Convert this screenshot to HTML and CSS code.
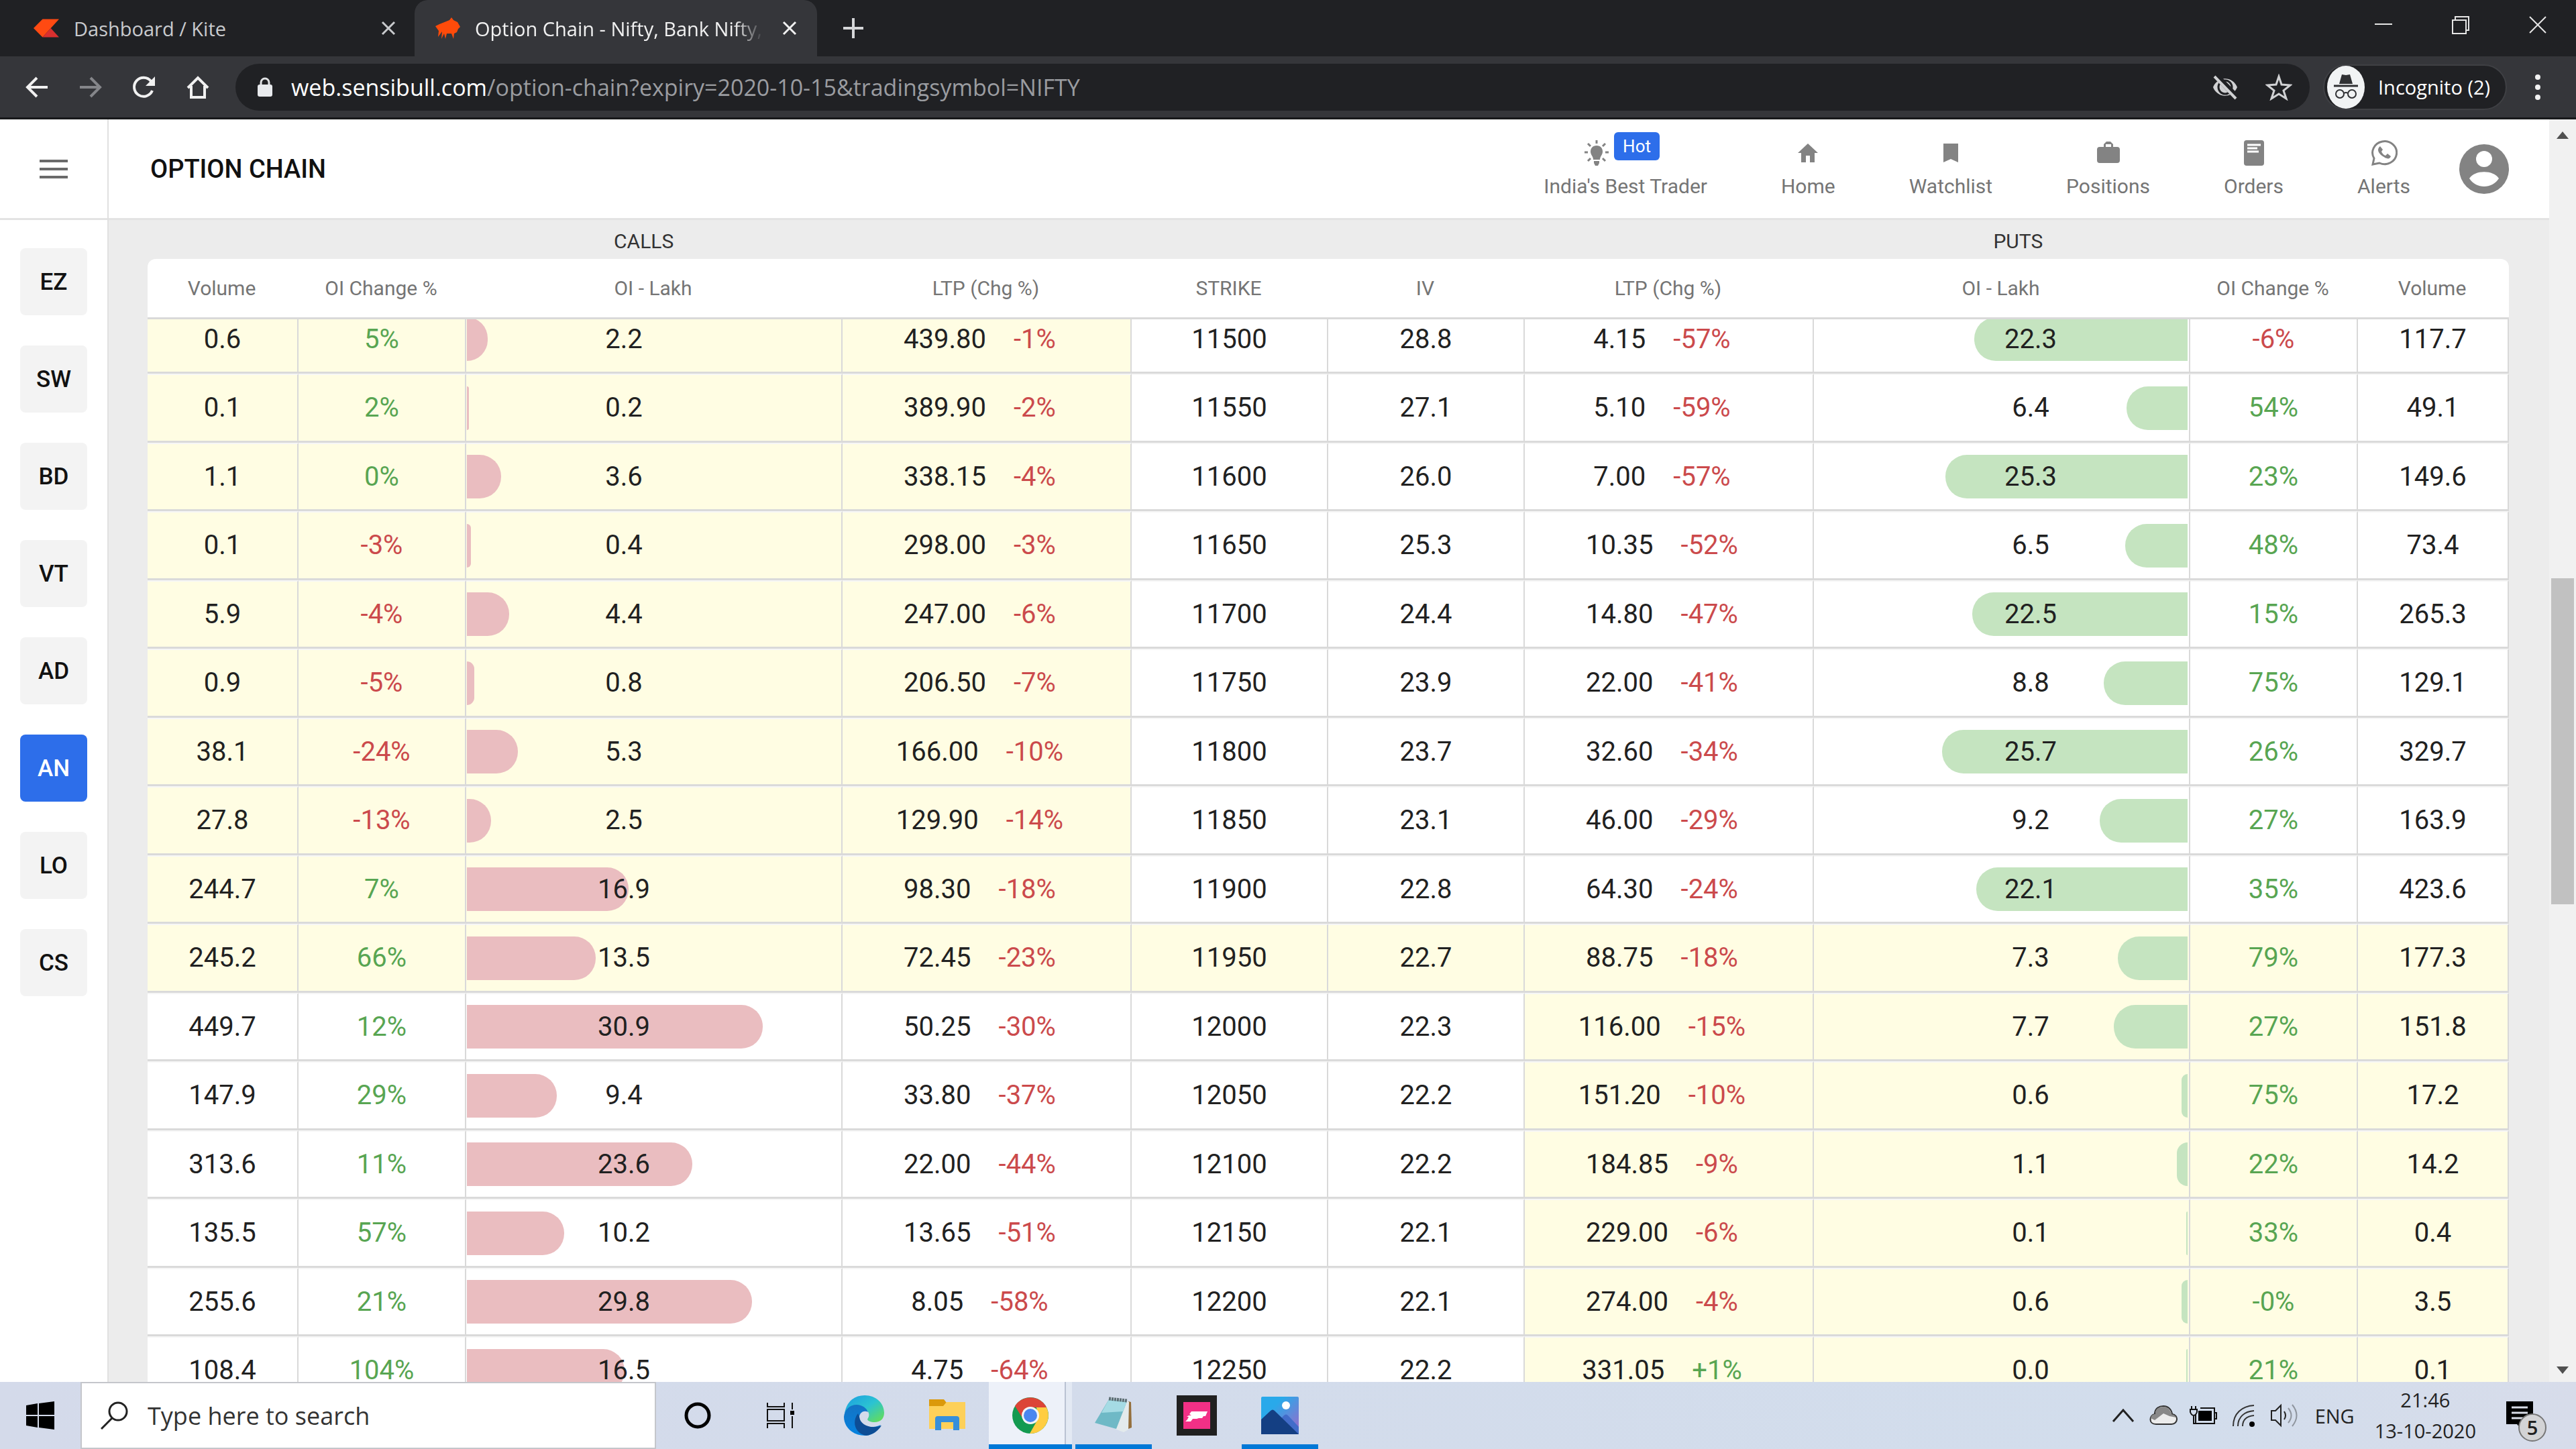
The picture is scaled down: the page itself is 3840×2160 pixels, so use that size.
FILE: index.html
```html
<!DOCTYPE html>
<html lang="en">
<head>
    <meta charset="UTF-8">
    <meta name="viewport" content="width=device-width, initial-scale=1.0">
    <title>Option Chain - Nifty, Bank Nifty</title>
    <link rel="stylesheet" href="styles.css">
</head>
<body>
    <!-- Tabs -->
    <div class="tabs">
        <div class="tab tab-first">
            <svg class="favicon" viewBox="0 0 34 24"><path d="M12 0h22L23 12 12 24 0 12z" fill="#ff4a12"/><path d="M23 12l11 12H12z" fill="#d9302f"/></svg>
            <span class="tab-title">Dashboard / Kite</span>
            <button class="tab-close" aria-label="Close tab"><svg viewBox="0 0 22 22"><path d="M2 2l18 18M20 2L2 20"/></svg></button>
        </div>
        <div class="tab active">
            <svg class="favicon" viewBox="0 0 38 32"><path d="M1 13l6-3 15-6 3-4 3 4 6 3 4 7-3 3-2 5-4 2-1 8-3-8h-7l-2 8-2-8-4 8 1-11-6 8 1-9z" fill="#ff4b0a"/></svg>
            <span class="tab-title">Option Chain - Nifty, Bank Nifty, F</span>
            <button class="tab-close" aria-label="Close tab"><svg viewBox="0 0 22 22"><path d="M2 2l18 18M20 2L2 20"/></svg></button>
        </div>
        <button class="new-tab" aria-label="New tab"><svg viewBox="0 0 30 30"><path d="M15 0v30M0 15h30"/></svg></button>
        <div class="window-controls">
            <button aria-label="Minimize"><svg viewBox="0 0 30 30"><path d="M2 14h26"/></svg></button>
            <button aria-label="Restore"><svg viewBox="0 0 30 30"><path d="M3 8h20v20H3zM7 8V3h20v20h-4"/></svg></button>
            <button aria-label="Close"><svg viewBox="0 0 30 30"><path d="M3 3l24 24M27 3L3 27"/></svg></button>
        </div>
    </div>

    <!-- Toolbar -->
    <div class="toolbar">
        <button class="tool" aria-label="Back"><svg viewBox="0 0 36 36"><path d="M34 18H4M18 4L4 18l14 14"/></svg></button>
        <button class="tool disabled" aria-label="Forward"><svg viewBox="0 0 36 36"><path d="M2 18h30M18 4l14 14-14 14"/></svg></button>
        <button class="tool" aria-label="Reload"><svg viewBox="0 0 36 36"><path d="M30 23a14 14 0 1 1-2-14"/><path d="M34 2v14H20z" class="solid"/></svg></button>
        <button class="tool" aria-label="Home"><svg viewBox="0 0 36 36"><path d="M3 19L18 4l15 15M8 16v17h20V16"/></svg></button>
        <div class="url-bar">
            <svg class="lock" viewBox="0 0 22 30"><path d="M5 12V8a6 6 0 0 1 12 0v4" fill="none" stroke="#e0e2e4" stroke-width="3"/><rect y="11" width="22" height="18" rx="3" fill="#e8eaed"/></svg>
            <span class="url"><b>web.sensibull.com</b>/option-chain?expiry=2020-10-15&amp;tradingsymbol=NIFTY</span>
            <svg class="url-icon" viewBox="0 0 40 40"><path d="M2 20C9 3 31 3 38 20 31 37 9 37 2 20z" fill="#d0d1d3"/><circle cx="20" cy="20" r="10" fill="none" stroke="#202124" stroke-width="3"/><path d="M7 3l30 32" stroke="#202124" stroke-width="9"/><path d="M4 4l32 33" stroke="#d0d1d3" stroke-width="4"/></svg>
            <svg class="url-icon" viewBox="0 0 40 40"><path d="M20 4l4 12 13 1-10 8 4 12-11-7-11 7 4-12-10-8 13-1z" fill="none" stroke="#d0d1d3" stroke-width="3"/></svg>
        </div>
        <button class="incognito">
            <svg viewBox="0 0 56 64"><ellipse cx="28" cy="32" rx="28" ry="32" fill="#f1f3f4"/><path d="M22 13l6 1 6-1 4 14H18z" fill="#303134"/><path d="M10 30h36" stroke="#303134" stroke-width="3"/><g fill="none" stroke="#303134" stroke-width="2"><circle cx="19" cy="42" r="6"/><circle cx="37" cy="42" r="6"/><path d="M25 41q3-2 6 0"/></g></svg>
            Incognito (2)
        </button>
        <button class="kebab" aria-label="Menu"><svg viewBox="0 0 10 40"><circle cx="5" cy="5" r="4"/><circle cx="5" cy="20" r="4"/><circle cx="5" cy="35" r="4"/></svg></button>
    </div>

    <!-- Page -->
    <div class="page">
        <aside class="sidebar">
            <button class="menu" aria-label="Open menu"><svg viewBox="0 0 42 30"><path d="M0 3h42M0 15h42M0 27h42"/></svg></button>
            <nav class="shortcuts">
                <a href="#">EZ</a>
                <a href="#">SW</a>
                <a href="#">BD</a>
                <a href="#">VT</a>
                <a href="#">AD</a>
                <a href="#" class="active">AN</a>
                <a href="#">LO</a>
                <a href="#">CS</a>
            </nav>
        </aside>

        <main>
            <header class="header">
                <h1>OPTION CHAIN</h1>
                <nav class="nav">
                    <a href="#" class="trader">
                        <span class="icon-row">
                            <svg viewBox="0 0 36 40"><path d="M18 9c6 0 9 4 9 9 0 5-4 7-4 12H13c0-5-4-7-4-12 0-5 3-9 9-9zM14 32h8v3l-2 4h-4l-2-4z"/><path d="M18 1v5M5 6l4 4M31 6l-4 4M0 19h5M31 19h5M5 32l4-4M31 32l-4-4" stroke="#838383" stroke-width="3"/></svg>
                            <span class="hot">Hot</span>
                        </span>
                        India's Best Trader
                    </a>
                    <a href="#"><svg viewBox="0 0 40 40"><path d="M20 6l15 14h-5v14h-7V24h-6v10h-7V20H5z"/></svg>Home</a>
                    <a href="#"><svg viewBox="0 0 40 40"><path d="M9 6h22v28l-11-5-11 5z"/></svg>Watchlist</a>
                    <a href="#"><svg viewBox="0 0 40 40"><path d="M13 11V7l4-4h6l4 4v4h6q4 0 4 4v16q0 4-4 4H7q-4 0-4-4V15q0-4 4-4zm3 0h8V7h-8z" fill-rule="evenodd"/></svg>Positions</a>
                    <a href="#"><svg viewBox="0 0 40 40"><rect x="5" y="1" width="30" height="38" rx="4"/><path d="M10 8h20M10 13h15M10 18h17" stroke="#fff" stroke-width="3"/></svg>Orders</a>
                    <a href="#"><svg viewBox="0 0 40 40"><path d="M3 37l2-9a18 17 0 1 1 8 7z" fill="none" stroke="#838383" stroke-width="3"/><path d="M14 10c-6 5-2 11 4 15 6 4 10 5 12 0l-5-4-3 3c-3-1-5-4-6-6l2-3z"/></svg>Alerts</a>
                </nav>
                <button class="avatar" aria-label="Account"><svg viewBox="0 0 74 74"><circle cx="37" cy="37" r="37" fill="#838383"/><circle cx="37" cy="22" r="12" fill="#fff"/><path d="M15 51c8-13 36-13 44 0-10 16-34 16-44 0z" fill="#fff"/></svg></button>
            </header>

            <section class="chain">
                <div class="sides"><span>CALLS</span><span></span><span>PUTS</span></div>
                <div class="table-wrap" id="tableWrap">
                    <table>
                        <colgroup>
                            <col class="c-volume"><col class="c-change"><col class="c-oi"><col class="c-ltp">
                            <col class="c-mid"><col class="c-mid">
                            <col class="c-ltp"><col class="c-oi"><col class="c-change"><col class="c-volume">
                        </colgroup>
                        <thead>
                            <tr>
                                <th>Volume</th>
                                <th>OI Change %</th>
                                <th>OI - Lakh</th>
                                <th>LTP (Chg %)</th>
                                <th>STRIKE</th>
                                <th>IV</th>
                                <th>LTP (Chg %)</th>
                                <th>OI - Lakh</th>
                                <th>OI Change %</th>
                                <th>Volume</th>
                            </tr>
                        </thead>
                        <tbody id="rows"></tbody>
                    </table>
                </div>
            </section>
        </main>

        <div class="scrollbar">
            <svg viewBox="0 0 20 12"><path d="M10 0l9 11H1z"/></svg>
            <div class="space-before"></div>
            <div class="thumb"></div>
            <div class="space-after"></div>
            <svg viewBox="0 0 20 12"><path d="M10 12L1 1h18z"/></svg>
        </div>
    </div>

    <!-- Taskbar -->
    <footer class="taskbar">
        <button class="start" aria-label="Start"><svg viewBox="0 0 42 42"><path d="M0 6l17-3v17H0zM19 3l23-3v20H19zM0 22h17v17L0 36zM19 22h23v20l-23-3z"/></svg></button>
        <label class="search">
            <svg viewBox="0 0 42 42"><circle cx="26" cy="15" r="13"/><path d="M17 25L1 41"/></svg>
            <input type="text" placeholder="Type here to search" aria-label="Search">
        </label>
        <button class="app" aria-label="Cortana"><svg viewBox="0 0 42 42"><circle cx="21" cy="21" r="17" fill="none" stroke="#000" stroke-width="5"/></svg></button>
        <button class="app" aria-label="Task view"><svg viewBox="0 0 42 42"><path d="M1 2v6h25V2M1 12h25v17H1zM1 40v-7h25v7M38 2v10M38 22v18" fill="none" stroke="#111" stroke-width="2"/><path d="M35 14h6v6h-6z"/></svg></button>
        <button class="app" aria-label="Edge"><svg class="large" viewBox="0 0 60 60">
            <defs>
                <linearGradient id="edgeTop" x1="0" y1="0" x2="1" y2="1"><stop offset="0" stop-color="#1b9de2"/><stop offset=".5" stop-color="#2bc3d2"/><stop offset="1" stop-color="#6be04a"/></linearGradient>
                <linearGradient id="edgeLow" x1="0" y1="0" x2="0" y2="1"><stop offset="0" stop-color="#1473c4"/><stop offset="1" stop-color="#0583e0"/></linearGradient>
            </defs>
            <path d="M1 27C4 9 16 0 31 0c17 0 29 12 29 26 0 9-6 14-14 14-8 0-13-3-10-6 4-7-1-14-9-15C18 14 6 18 1 27z" fill="url(#edgeTop)"/>
            <path d="M0 32C1 20 10 14 19 14c8 0 15 5 17 11-6-3-12 0-13 7 0 12 14 20 32 12C48 56 40 60 31 60 14 60 0 48 0 32z" fill="url(#edgeLow)"/>
            <path d="M21 27c-10 13-4 30 12 33 10-1 18-7 23-15-16 6-32-1-33-13z" fill="#0d4d95"/>
        </svg></button>
        <button class="app" aria-label="File Explorer"><svg class="large" viewBox="0 0 60 60"><path d="M3 6h22l4 5-4 5H3z" fill="#db990b"/><path d="M3 16h21l5-6h28v40H3z" fill="#fdd059"/><path d="M12 52V35q0-4 4-4h28q4 0 4 4v17h-9V40H21v12z" fill="#368fdb"/></svg></button>
        <button class="app open current" aria-label="Chrome"><svg class="large" viewBox="0 0 60 60"><circle cx="30" cy="30" r="27" fill="#139a50"/><path d="M7 16A27 27 0 0 1 54 18H30L17 32z" fill="#dc4437"/><path d="M54 18a27 27 0 0 1-25 39l13-23-3-16z" fill="#ffcd42"/><circle cx="30" cy="30" r="13" fill="#f4f4f4"/><circle cx="30" cy="30" r="10" fill="#4a86f0"/></svg></button>
        <button class="app open" aria-label="Notepad"><svg class="large" viewBox="0 0 60 60"><path d="M52 9l4 1 1 38-5 2z" fill="#946f3c"/><path d="M49 8l4 2-1 41-7 4-13-5z" fill="#e3eaec"/><path d="M23 6l27 3-16 41-32-9z" fill="#6fb9c6"/><path d="M23 6l27 3-6 15-32 2z" fill="#a5dbe4"/><path d="M23 5l27 3" stroke="#5d6e73" stroke-width="5" stroke-dasharray="3 1"/></svg></button>
        <button class="app" aria-label="Trading app"><svg class="large" viewBox="0 0 60 60"><path d="M0 0h60v60H0z" fill="#202020"/><path d="M10 10h40v40H10z" fill="#f23086"/><path d="M22 24h24l-3 7h-3l-2 3h-5l-3 1h-6l-3 4h-8l3-3 2-4h-3l3-2h4l-3-2z" fill="#fff"/></svg></button>
        <button class="app open" aria-label="Photos"><svg class="large" viewBox="0 0 60 60"><defs><linearGradient id="photo" x1="0" y1="0" x2="1" y2="1"><stop offset=".3" stop-color="#29a9ea"/><stop offset="1" stop-color="#a166c8"/></linearGradient></defs><rect x="2" y="2" width="56" height="56" rx="2" fill="url(#photo)"/><path d="M28 38l8-8q3-3 6 0l16 17v11H40z" fill="#426cc9"/><path d="M2 36l14-13q3-3 6 0l36 35H2z" fill="#143f83"/><circle cx="39" cy="15" r="6" fill="#fff"/></svg></button>

        <div class="tray">
            <svg class="chevron" viewBox="0 0 42 42"><path d="M6 30l15-17 15 17"/></svg>
            <svg viewBox="0 0 42 42"><path d="M10 34C-2 34 0 20 8 19 8 10 15 7 21 7s12 4 13 12c10 1 9 15-1 15z" fill="#ececec" stroke="#333" stroke-width="2"/><path d="M2 25c1-4 3-6 7-6C8 11 15 8 21 8s10 4 12 11c3 1 6 2 7 5l-10-2-9-4-13 10z" fill="#888"/></svg>
            <svg viewBox="0 0 42 42"><path d="M9 20v13h28V10H16M37 17h3v9h-3M3 7v5M9 7v5M1 12h10v4q-2 5-5 5t-5-5zM6 21v12h4" fill="none" stroke="#111" stroke-width="2"/><path d="M13 14h20v15H13z"/></svg>
            <svg viewBox="0 0 42 42"><path d="M5 37C5 18 18 7 36 6M12 37c0-14 10-22 24-23M19 37c0-10 7-15 17-16" fill="none" stroke="#333" stroke-width="2"/><circle cx="33" cy="34" r="4"/></svg>
            <svg viewBox="0 0 42 42"><path d="M2 14h6l8-8v30l-8-8H2z" fill="none" stroke="#222" stroke-width="2"/><path d="M21 15q4 6 0 12" fill="none" stroke="#222" stroke-width="2"/><path d="M27 10q9 11 0 22M33 5q13 16 0 32" fill="none" stroke="#8f959e" stroke-width="2"/></svg>
            <span class="lang">ENG</span>
            <div class="clock"><time>21:46</time><span>13-10-2020</span></div>
            <button class="notifications" aria-label="Notifications">
                <svg viewBox="0 0 42 42"><path d="M0 0h40v34H28l-6 7-6-7H0z"/><path d="M8 9h24M8 17h24M8 25h17" stroke="#d8dce6" stroke-width="3"/></svg>
                <span class="badge">5</span>
            </button>
        </div>
    </footer>

    <script>
        // OI (in lakh) that would fill the whole cell
        var MAX_OI = 39;

        // call volume, OI change, OI, LTP, chg | strike, IV | put LTP, chg, OI, OI change, volume
        var data = [
            ["0.6", "5%", "2.2", "439.80", "-1%", 11500, "28.8", "4.15", "-57%", "22.3", "-6%", "117.7"],
            ["0.1", "2%", "0.2", "389.90", "-2%", 11550, "27.1", "5.10", "-59%", "6.4", "54%", "49.1"],
            ["1.1", "0%", "3.6", "338.15", "-4%", 11600, "26.0", "7.00", "-57%", "25.3", "23%", "149.6"],
            ["0.1", "-3%", "0.4", "298.00", "-3%", 11650, "25.3", "10.35", "-52%", "6.5", "48%", "73.4"],
            ["5.9", "-4%", "4.4", "247.00", "-6%", 11700, "24.4", "14.80", "-47%", "22.5", "15%", "265.3"],
            ["0.9", "-5%", "0.8", "206.50", "-7%", 11750, "23.9", "22.00", "-41%", "8.8", "75%", "129.1"],
            ["38.1", "-24%", "5.3", "166.00", "-10%", 11800, "23.7", "32.60", "-34%", "25.7", "26%", "329.7"],
            ["27.8", "-13%", "2.5", "129.90", "-14%", 11850, "23.1", "46.00", "-29%", "9.2", "27%", "163.9"],
            ["244.7", "7%", "16.9", "98.30", "-18%", 11900, "22.8", "64.30", "-24%", "22.1", "35%", "423.6"],
            ["245.2", "66%", "13.5", "72.45", "-23%", 11950, "22.7", "88.75", "-18%", "7.3", "79%", "177.3"],
            ["449.7", "12%", "30.9", "50.25", "-30%", 12000, "22.3", "116.00", "-15%", "7.7", "27%", "151.8"],
            ["147.9", "29%", "9.4", "33.80", "-37%", 12050, "22.2", "151.20", "-10%", "0.6", "75%", "17.2"],
            ["313.6", "11%", "23.6", "22.00", "-44%", 12100, "22.2", "184.85", "-9%", "1.1", "22%", "14.2"],
            ["135.5", "57%", "10.2", "13.65", "-51%", 12150, "22.1", "229.00", "-6%", "0.1", "33%", "0.4"],
            ["255.6", "21%", "29.8", "8.05", "-58%", 12200, "22.1", "274.00", "-4%", "0.6", "-0%", "3.5"],
            ["108.4", "104%", "16.5", "4.75", "-64%", 12250, "22.2", "331.05", "+1%", "0.0", "21%", "0.1"]
        ];
        var ATM = 11950;

        function color(value) {
            return parseFloat(value) < 0 ? "red" : "green";
        }

        function cell(content, itm) {
            return `<td class="${itm ? "itm" : ""}">${content}</td>`;
        }

        function change(value) {
            return `<span class="${color(value)}">${value}</span>`;
        }

        function oi(value, side) {
            var width = Math.max(value / MAX_OI * 100, 0.4);
            return `<div class="oi ${side}"><div class="bar" style="width: ${width}%"></div><span>${value}</span></div>`;
        }

        function ltp(price, chg) {
            return `<div class="ltp"><span>${price}</span>${change(chg)}</div>`;
        }

        var html = "";
        data.forEach(function (r) {
            var strike = r[5];
            var callItm = strike <= ATM;
            var putItm = strike >= ATM;
            var atm = strike === ATM;
            html += "<tr>" +
                cell(r[0], callItm) +
                cell(change(r[1]), callItm) +
                cell(oi(r[2], "call"), callItm) +
                cell(ltp(r[3], r[4]), callItm) +
                cell(strike, atm) +
                cell(r[6], atm) +
                cell(ltp(r[7], r[8]), putItm) +
                cell(oi(r[9], "put"), putItm) +
                cell(change(r[10]), putItm) +
                cell(r[11], putItm) +
                "</tr>";
        });
        document.getElementById("rows").innerHTML = html;
        document.getElementById("tableWrap").scrollTop = 21;
    </script>
</body>
</html>
```
FILE: styles.css
```css
* {
    box-sizing: border-box;
}
body {
    margin: 0;
    height: 100vh;
    overflow: hidden;
    display: flex;
    flex-direction: column;
    font-family: Roboto, sans-serif;
    color: #212121;
}
button {
    padding: 0;
    border: none;
    background: none;
    font: inherit;
    color: inherit;
    display: flex;
    align-items: center;
    justify-content: center;
}
a {
    color: inherit;
    text-decoration: none;
}
svg {
    flex: none;
}

/* Tabs */
.tabs {
    height: 84px;
    flex: none;
    display: flex;
    background: #202124;
    color: #c8cacd;
    font-family: "Open Sans", sans-serif;
    font-size: 29px;
}
.tab {
    width: 600px;
    display: flex;
    align-items: center;
    padding: 0 30px;
}
.tab-first {
    width: 618px;
    padding: 0 28px 0 50px;
}
.tab.active {
    background: #35363a;
    border-radius: 20px 20px 0 0;
    color: #f1f1f1;
}
.favicon {
    width: 38px;
    height: 28px;
    margin-right: 22px;
}
.active .favicon {
    height: 34px;
}
.tab-title {
    flex: 1;
    overflow: hidden;
    white-space: nowrap;
}
.tab.active .tab-title {
    margin-right: 28px;
    mask-image: linear-gradient(to right, #000 90%, transparent);
}
.tab-close svg {
    width: 22px;
    height: 22px;
    fill: none;
    stroke: currentColor;
    stroke-width: 3;
}
.new-tab {
    width: 108px;
}
.new-tab svg {
    width: 30px;
    height: 30px;
    stroke: #d5d6d8;
    stroke-width: 4;
}
.window-controls {
    margin-left: auto;
    height: 74px;
    display: flex;
}
.window-controls button {
    width: 115px;
}
.window-controls svg {
    width: 30px;
    height: 30px;
    fill: none;
    stroke: #e6e6e6;
    stroke-width: 2;
}

/* Toolbar */
.toolbar {
    height: 94px;
    flex: none;
    display: flex;
    align-items: center;
    padding: 0 11px 0 15px;
    background: #35363a;
    border-bottom: 3px solid #18191b;
    font-family: "Open Sans", sans-serif;
}
.tool {
    width: 80px;
    height: 70px;
}
.tool svg {
    width: 36px;
    height: 36px;
    fill: none;
    stroke: #f1f1f1;
    stroke-width: 4;
}
.tool .solid {
    fill: #f1f1f1;
    stroke: none;
}
.tool.disabled svg {
    stroke: #85868a;
}
.url-bar {
    flex: 1;
    height: 70px;
    margin-left: 16px;
    padding: 0 26px 0 33px;
    display: flex;
    align-items: center;
    border-radius: 35px;
    background: #202124;
}
.lock {
    width: 22px;
    height: 30px;
    margin-right: 28px;
}
.url {
    flex: 1;
    font-size: 34px;
    color: #9a9ca0;
}
.url b {
    font-weight: 400;
    color: #fff;
}
.url-icon {
    width: 40px;
    height: 40px;
    margin-left: 40px;
}
.incognito {
    width: 274px;
    height: 68px;
    margin-left: 20px;
    padding-left: 4px;
    gap: 20px;
    justify-content: flex-start;
    white-space: nowrap;
    border: 2px solid #3f4044;
    border-radius: 34px;
    background: #202124;
    color: #fff;
    font-size: 29px;
}
.incognito svg {
    width: 56px;
    height: 64px;
}
.kebab {
    width: 92px;
}
.kebab svg {
    width: 10px;
    height: 40px;
    fill: #f1f1f1;
}

/* Page */
.page {
    flex: 1;
    min-height: 0;
    display: flex;
    background: #ececec;
}
.sidebar {
    width: 162px;
    flex: none;
    background: #fff;
    border-right: 2px solid #e0e0e0;
}
.menu {
    width: 100%;
    height: 150px;
    border-bottom: 3px solid #e3e3e3;
}
.menu svg {
    width: 42px;
    height: 30px;
    stroke: #6a6a6a;
    stroke-width: 4;
}
.shortcuts {
    padding-top: 42px;
    display: flex;
    flex-direction: column;
    align-items: center;
    gap: 45px;
}
.shortcuts a {
    width: 100px;
    height: 100px;
    display: flex;
    align-items: center;
    justify-content: center;
    border-radius: 8px;
    background: #f3f3f3;
    font-size: 35px;
    font-weight: 500;
    color: #111;
}
.shortcuts a.active {
    background: #2d6eea;
    color: #fff;
}
main {
    flex: 1;
    min-width: 0;
    display: flex;
    flex-direction: column;
}
.header {
    height: 150px;
    flex: none;
    display: flex;
    align-items: center;
    padding: 0 60px 0 62px;
    background: #fff;
    border-bottom: 3px solid #e3e3e3;
}
h1 {
    margin: 0;
    font-size: 38px;
    font-weight: 500;
    color: #111;
}
.nav {
    margin-left: auto;
    margin-right: 73px;
    display: flex;
    gap: 110px;
}
.nav a {
    display: flex;
    flex-direction: column;
    align-items: center;
    gap: 12px;
    font-size: 30px;
    line-height: 36px;
    color: #757575;
}
.nav svg {
    width: 40px;
    height: 40px;
    fill: #838383;
}
.icon-row {
    position: relative;
    height: 40px;
    margin-right: 86px;
}
.hot {
    position: absolute;
    left: 46px;
    top: -11px;
    padding: 0 13px;
    border-radius: 6px;
    background: #2d6eea;
    color: #fff;
    font-size: 26px;
    line-height: 42px;
}
.avatar svg {
    width: 74px;
    height: 74px;
}

/* Option chain */
.chain {
    flex: 1;
    min-height: 0;
    display: flex;
    flex-direction: column;
    padding: 0 60px 0 58px;
}
.sides {
    height: 58px;
    flex: none;
    display: grid;
    grid-template-columns: 5fr 2fr 5fr;
    align-items: center;
    padding: 4px 0 0 8px;
    text-align: center;
    font-size: 30px;
    color: #333;
}
.table-wrap {
    flex: 1;
    min-height: 0;
    overflow: hidden;
    border-radius: 12px 12px 0 0;
}
table {
    width: 100%;
    table-layout: fixed;
    border-collapse: separate;
    border-spacing: 0;
}
.c-volume {
    width: 225px;
}
.c-change {
    width: 250px;
}
.c-oi {
    width: auto;
}
.c-ltp {
    width: 431px;
}
.c-mid {
    width: 293px;
}
th {
    position: sticky;
    top: 0;
    z-index: 1;
    height: 90px;
    padding: 0 4px 0 0;
    background: #fff;
    border-bottom: 3px solid #d9d9d9;
    font-size: 30px;
    font-weight: 400;
    color: #757575;
}
td {
    height: 102px;
    padding: 0;
    text-align: center;
    font-size: 40px;
    line-height: 32px;
    background: #fff;
    border-top: 2px solid #f6f6f6;
    border-bottom: 3px solid #dadada;
    border-right: 2px solid #d9d9d9;
}
tr:nth-child(even) td {
    height: 103px;
}
td.itm {
    background: #fffde3;
}
.green {
    color: #58a552;
}
.red {
    color: #cb4a4c;
}
.ltp {
    display: flex;
    justify-content: center;
    gap: 41px;
    padding-right: 20px;
}
.oi {
    display: grid;
    align-items: center;
    padding: 0 2px 0 1px;
}
.oi > * {
    grid-area: 1 / 1;
}
.oi .bar {
    height: 65px;
}
.call .bar {
    background: #eabdc0;
    border-radius: 0 32px 32px 0;
}
.put .bar {
    justify-self: end;
    background: #c5e4c0;
    border-radius: 32px 0 0 32px;
}
.call span {
    padding-right: 88px;
}
.put span {
    padding-left: 88px;
}

/* Page scrollbar */
.scrollbar {
    width: 40px;
    flex: none;
    display: flex;
    flex-direction: column;
    align-items: center;
    padding: 18px 0 12px;
    background: #f1f1f1;
}
.scrollbar svg {
    width: 20px;
    height: 12px;
    fill: #505050;
}
.thumb {
    width: 34px;
    flex: 486;
    background: #c1c1c1;
}
.space-before {
    flex: 654;
}
.space-after {
    flex: 688;
}

/* Taskbar */
.taskbar {
    height: 100px;
    flex: none;
    display: flex;
    background: linear-gradient(to right, #d4daea, #d2ddec 85%, #d7dcea);
    font-family: "Open Sans", sans-serif;
}
.start {
    width: 120px;
}
.taskbar svg {
    width: 42px;
    height: 42px;
}
.search {
    width: 858px;
    display: flex;
    align-items: center;
    gap: 28px;
    padding-left: 28px;
    border: 2px solid #c4c6cb;
    background: #fff;
}
.search svg {
    fill: none;
    stroke: #222;
    stroke-width: 3;
}
.search input {
    flex: 1;
    border: none;
    outline: none;
    padding: 0;
    background: none;
    font-family: inherit;
    font-size: 36px;
}
.search input::placeholder {
    color: #333;
}
.app {
    width: 124px;
    border-bottom: 7px solid transparent;
    padding-top: 7px;
}
.app.open {
    border-image: linear-gradient(to right, transparent 9%, #0078d7 9%, #0078d7 91%, transparent 91%) 7;
}
.app.open.current {
    background: linear-gradient(to right, #edf1f9 113px, #b9c2d2 113px, #b9c2d2 115px, #e3e9f3 115px);
    border-image: none;
    border-bottom-color: #0078d7;
}
.taskbar .large {
    width: 60px;
    height: 60px;
}
.tray {
    margin-left: auto;
    display: flex;
    align-items: center;
    gap: 18px;
    padding-right: 62px;
}
.tray .chevron {
    fill: none;
    stroke: #222;
    stroke-width: 3;
}
.lang {
    margin-left: 7px;
    font-size: 29px;
    color: #222;
}
.clock {
    display: flex;
    flex-direction: column;
    align-items: center;
    margin-left: 12px;
    font-size: 29px;
    line-height: 46px;
    color: #222;
}
.notifications {
    position: relative;
    margin-left: 27px;
}
.badge {
    position: absolute;
    left: 18px;
    top: 18px;
    width: 42px;
    height: 42px;
    border: 2px solid #777;
    border-radius: 50%;
    background: #d3d3d5;
    font-size: 29px;
    font-weight: 600;
    line-height: 38px;
    text-align: center;
}
```
